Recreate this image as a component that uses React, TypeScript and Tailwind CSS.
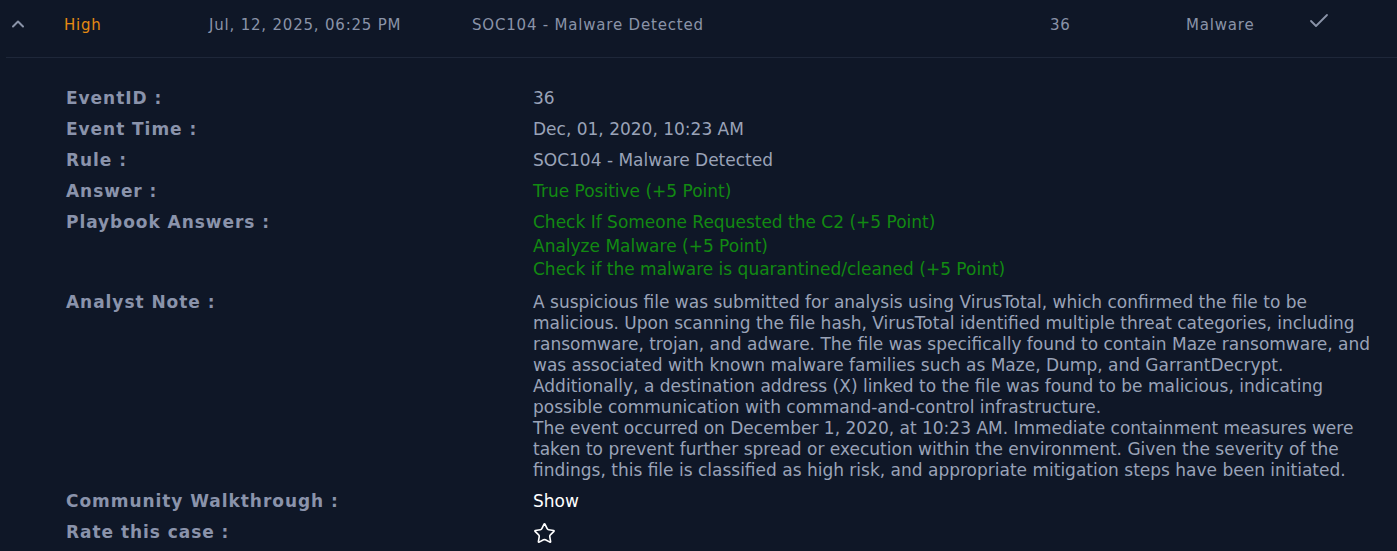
import React from 'react'
import { ChevronUp, Check, Star } from 'lucide-react'

const Label = ({ children, className = '' }: { children: React.ReactNode; className?: string }) => (
    <div className={`text-[#8a93ab] font-bold text-[17px] tracking-[0.95px] leading-[21px] ${className}`}>{children}</div>
)

const App = () => {
    const font = { fontFamily: '"DejaVu Sans", sans-serif' }
    return (
        <div className="min-h-screen w-full bg-[#0f1727]" style={font}>
            <div className="flex items-start pt-[14px] h-[58px] text-[15px] tracking-[0.8px] text-[#8a93a8] ml-[6px] border-b border-[#1e2739]">
                <div className="w-[58px] flex justify-start pl-[2px]">
                    <ChevronUp className="w-5 h-5 text-[#8a93a8]" strokeWidth={2.4} />
                </div>
                <div className="w-[145px] text-[#e58b12]">High</div>
                <div className="w-[263px]">Jul, 12, 2025, 06:25 PM</div>
                <div className="w-[578px]">SOC104 - Malware Detected</div>
                <div className="w-[136px]">36</div>
                <div className="w-[121px]">Malware</div>
                <Check className="w-6 h-6 -mt-[5px]" strokeWidth={1.8} />
            </div>

            <div className="pl-[66px] pt-[30px] grid grid-cols-[467px_1fr] gap-y-[10px] text-[17px] leading-[21px]">
                <Label>EventID :</Label>
                <div className="text-[#9aa3b8]">36</div>
                <Label>Event Time :</Label>
                <div className="text-[#9aa3b8]">Dec, 01, 2020, 10:23 AM</div>
                <Label>Rule :</Label>
                <div className="text-[#9aa3b8]">SOC104 - Malware Detected</div>
                <Label>Answer :</Label>
                <div className="text-[#128a12]">True Positive (+5 Point)</div>
                <Label>Playbook Answers :</Label>
                <div className="text-[#128a12] flex flex-col gap-[2.5px]">
                    <span>Check If Someone Requested the C2 (+5 Point)</span>
                    <span>Analyze Malware (+5 Point)</span>
                    <span>Check if the malware is quarantined/cleaned (+5 Point)</span>
                </div>
                <Label className="mt-[2px]">Analyst Note :</Label>
                <div className="text-[#9aa3b8] pr-[14px] mt-[2px]">
                    <p>A suspicious file was submitted for analysis using VirusTotal, which confirmed the file to be malicious. Upon scanning the file hash, VirusTotal identified multiple threat categories, including ransomware, trojan, and adware. The file was specifically found to contain Maze ransomware, and was associated with known malware families such as Maze, Dump, and GarrantDecrypt. Additionally, a destination address (X) linked to the file was found to be malicious, indicating possible communication with command-and-control infrastructure.</p>
                    <p>The event occurred on December 1, 2020, at 10:23 AM. Immediate containment measures were taken to prevent further spread or execution within the environment. Given the severity of the findings, this file is classified as high risk, and appropriate mitigation steps have been initiated.</p>
                </div>
                <Label>Community Walkthrough :</Label>
                <div className="text-white cursor-pointer">Show</div>
                <Label>Rate this case :</Label>
                <div className="text-white">
                    <Star className="w-[23px] h-[23px]" strokeWidth={1.7} />
                </div>
            </div>
        </div>
    )
}

export default App
